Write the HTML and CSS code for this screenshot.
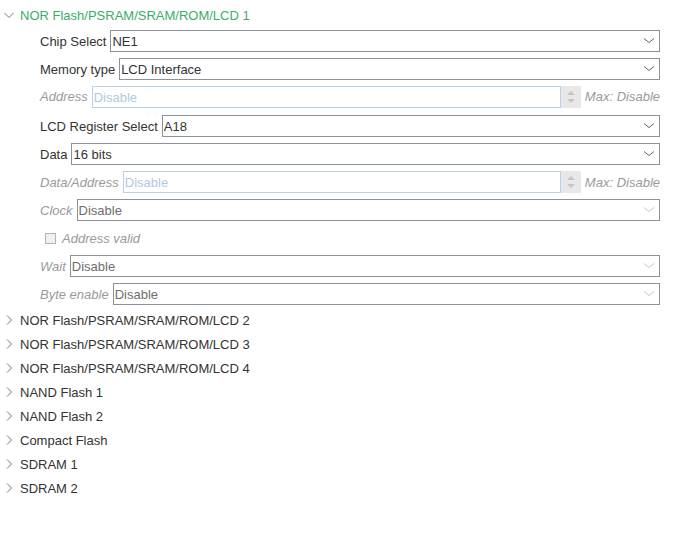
FILE: index.html
```html
<!DOCTYPE html>
<html>
<head>
<meta charset="utf-8">
<link rel="stylesheet" href="styles.css">
</head>
<body>
<div class="tree">
  <div class="node">
    <div class="head open">
      <svg class="tw" width="12" height="12" viewBox="0 0 12 12"><path d="M1.5 4 L6 8.5 L10.5 4" fill="none" stroke="#777" stroke-width="1"/></svg>
      <span class="title green">NOR Flash/PSRAM/SRAM/ROM/LCD 1</span>
    </div>
    <div class="body">
      <div class="field">
        <span class="lbl">Chip Select</span>
        <div class="sel"><span class="val">NE1</span><svg class="chev" width="12" height="8" viewBox="0 0 12 8"><path d="M1 1.5 L6 5.5 L11 1.5" fill="none" stroke="#666" stroke-width="1"/></svg></div>
      </div>
      <div class="field">
        <span class="lbl">Memory type</span>
        <div class="sel"><span class="val">LCD Interface</span><svg class="chev" width="12" height="8" viewBox="0 0 12 8"><path d="M1 1.5 L6 5.5 L11 1.5" fill="none" stroke="#666" stroke-width="1"/></svg></div>
      </div>
      <div class="field tall">
        <span class="lbl dis">Address</span>
        <div class="num"><span class="val">Disable</span></div>
        <div class="spin"><span class="up"></span><span class="down"></span></div>
        <span class="max">Max: Disable</span>
      </div>
      <div class="field">
        <span class="lbl">LCD Register Select</span>
        <div class="sel"><span class="val">A18</span><svg class="chev" width="12" height="8" viewBox="0 0 12 8"><path d="M1 1.5 L6 5.5 L11 1.5" fill="none" stroke="#666" stroke-width="1"/></svg></div>
      </div>
      <div class="field">
        <span class="lbl">Data</span>
        <div class="sel"><span class="val">16 bits</span><svg class="chev" width="12" height="8" viewBox="0 0 12 8"><path d="M1 1.5 L6 5.5 L11 1.5" fill="none" stroke="#666" stroke-width="1"/></svg></div>
      </div>
      <div class="field">
        <span class="lbl dis">Data/Address</span>
        <div class="num"><span class="val">Disable</span></div>
        <div class="spin"><span class="up"></span><span class="down"></span></div>
        <span class="max">Max: Disable</span>
      </div>
      <div class="field">
        <span class="lbl dis">Clock</span>
        <div class="sel off"><span class="val">Disable</span><svg class="chev" width="12" height="8" viewBox="0 0 12 8"><path d="M1 1.5 L6 5.5 L11 1.5" fill="none" stroke="#c4c4c4" stroke-width="1"/></svg></div>
      </div>
      <div class="field check">
        <span class="box"></span>
        <span class="lbl dis">Address valid</span>
      </div>
      <div class="field">
        <span class="lbl dis">Wait</span>
        <div class="sel off"><span class="val">Disable</span><svg class="chev" width="12" height="8" viewBox="0 0 12 8"><path d="M1 1.5 L6 5.5 L11 1.5" fill="none" stroke="#c4c4c4" stroke-width="1"/></svg></div>
      </div>
      <div class="field">
        <span class="lbl dis">Byte enable</span>
        <div class="sel off"><span class="val">Disable</span><svg class="chev" width="12" height="8" viewBox="0 0 12 8"><path d="M1 1.5 L6 5.5 L11 1.5" fill="none" stroke="#c4c4c4" stroke-width="1"/></svg></div>
      </div>
    </div>
  </div>
  <div class="head"><svg class="tw" width="12" height="12" viewBox="0 0 12 12"><path d="M4 1.5 L8.5 6 L4 10.5" fill="none" stroke="#777" stroke-width="1"/></svg><span class="title">NOR Flash/PSRAM/SRAM/ROM/LCD 2</span></div>
  <div class="head"><svg class="tw" width="12" height="12" viewBox="0 0 12 12"><path d="M4 1.5 L8.5 6 L4 10.5" fill="none" stroke="#777" stroke-width="1"/></svg><span class="title">NOR Flash/PSRAM/SRAM/ROM/LCD 3</span></div>
  <div class="head"><svg class="tw" width="12" height="12" viewBox="0 0 12 12"><path d="M4 1.5 L8.5 6 L4 10.5" fill="none" stroke="#777" stroke-width="1"/></svg><span class="title">NOR Flash/PSRAM/SRAM/ROM/LCD 4</span></div>
  <div class="head"><svg class="tw" width="12" height="12" viewBox="0 0 12 12"><path d="M4 1.5 L8.5 6 L4 10.5" fill="none" stroke="#777" stroke-width="1"/></svg><span class="title">NAND Flash 1</span></div>
  <div class="head"><svg class="tw" width="12" height="12" viewBox="0 0 12 12"><path d="M4 1.5 L8.5 6 L4 10.5" fill="none" stroke="#777" stroke-width="1"/></svg><span class="title">NAND Flash 2</span></div>
  <div class="head"><svg class="tw" width="12" height="12" viewBox="0 0 12 12"><path d="M4 1.5 L8.5 6 L4 10.5" fill="none" stroke="#777" stroke-width="1"/></svg><span class="title">Compact Flash</span></div>
  <div class="head"><svg class="tw" width="12" height="12" viewBox="0 0 12 12"><path d="M4 1.5 L8.5 6 L4 10.5" fill="none" stroke="#777" stroke-width="1"/></svg><span class="title">SDRAM 1</span></div>
  <div class="head"><svg class="tw" width="12" height="12" viewBox="0 0 12 12"><path d="M4 1.5 L8.5 6 L4 10.5" fill="none" stroke="#777" stroke-width="1"/></svg><span class="title">SDRAM 2</span></div>
</div>
</body>
</html>
```
FILE: styles.css
```css
html, body {
  margin: 0;
  padding: 0;
  background: #fff;
}
body {
  font-family: "Liberation Sans", Arial, sans-serif;
  font-size: 13px;
  color: #333;
}
.tree {
  padding: 3px 19px 0 3px;
}
.head {
  display: flex;
  align-items: center;
  height: 24px;
}
.tw {
  display: block;
  flex: none;
  width: 12px;
  height: 12px;
  margin-right: 5px;
}
.title {
  white-space: nowrap;
}
.green {
  color: #3aad6a;
}
.body {
  padding-left: 37px;
}
.field {
  display: flex;
  align-items: center;
  height: 28px;
}
.field.tall {
  height: 29px;
  align-items: flex-start;
  padding-top: 3px;
  box-sizing: border-box;
}
.lbl {
  flex: none;
  white-space: nowrap;
  margin-right: 4px;
}
.field.tall .lbl,
.field.tall .max {
  line-height: 22px;
}
.lbl.dis {
  font-style: italic;
  color: #9a9a9a;
}
.sel, .num {
  flex: 1;
  display: flex;
  align-items: center;
  height: 22px;
  box-sizing: border-box;
  border: 1px solid #8d9298;
  padding: 0 2px 0 1px;
  background: #fff;
}
.sel .val {
  flex: 1;
}
.chev {
  display: block;
  margin-right: 2px;
}
.sel.off .val {
  color: #6e6e6e;
}
.num {
  border-color: #b9d1ea;
  color: #b3c7df;
}
.spin {
  flex: none;
  width: 20px;
  height: 22px;
  background: #e8e8e8;
  display: flex;
  flex-direction: column;
  align-items: center;
  justify-content: center;
  gap: 4px;
}
.up {
  width: 0;
  height: 0;
  border-left: 4px solid transparent;
  border-right: 4px solid transparent;
  border-bottom: 4px solid #c5c5c5;
}
.down {
  width: 0;
  height: 0;
  border-left: 4px solid transparent;
  border-right: 4px solid transparent;
  border-top: 4px solid #c5c5c5;
}
.max {
  flex: none;
  margin-left: 4px;
  font-style: italic;
  color: #9a9a9a;
}
.check {
  padding-left: 5px;
}
.box {
  flex: none;
  width: 11px;
  height: 11px;
  box-sizing: border-box;
  border: 1px solid #b4b4b4;
  background: #f0f0f0;
  margin-right: 6px;
}
```
